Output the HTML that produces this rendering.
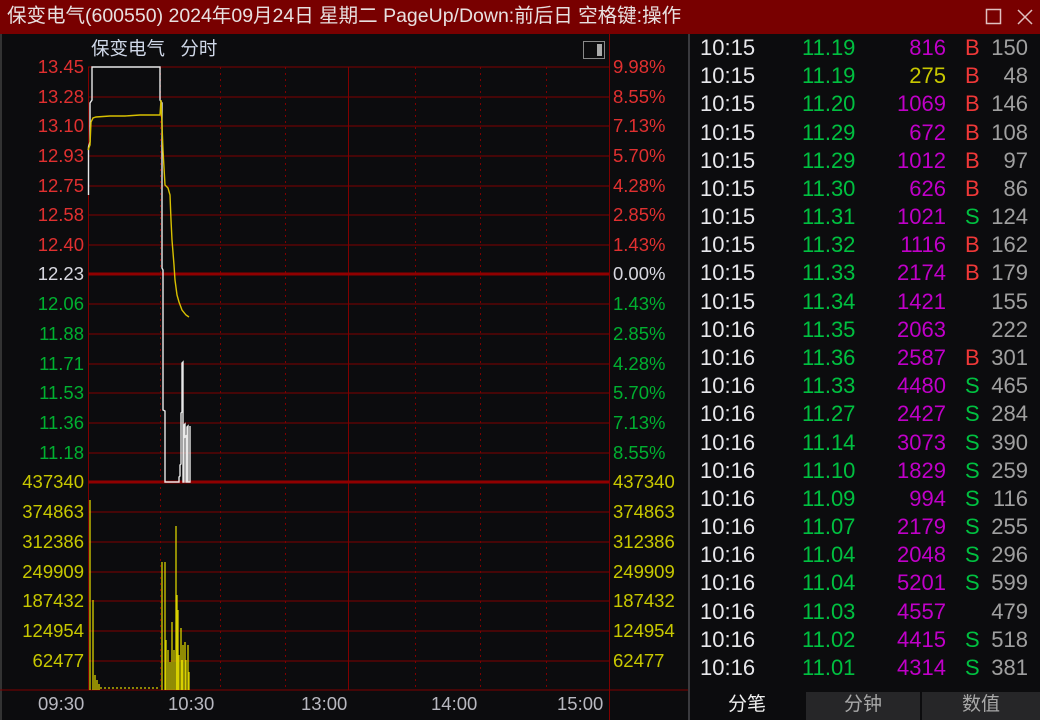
<!DOCTYPE html>
<html><head><meta charset="utf-8"><style>
*{margin:0;padding:0;box-sizing:border-box}
body{width:1040px;height:720px;background:#0c0c0e;overflow:hidden;position:relative;font-family:"Liberation Sans","Noto Sans CJK SC",sans-serif}
#title{position:absolute;left:0;top:0;width:1040px;height:34px;background:#780000;color:#e8e0e0;font-size:19.5px;line-height:33px;padding-left:7px;white-space:nowrap}
.l{position:absolute;font-size:18.5px;line-height:20px;white-space:nowrap}
.r{position:absolute;width:350px;left:690px;height:28px;font-size:22px;line-height:28px}
.r span{position:absolute}
.t{left:10px;color:#e8e8ec}.p{left:112px;color:#00c040}.v{right:94px;color:#c000c8}.f{left:275px}.n{right:12px;color:#a0a0a0}
.tab{position:absolute;top:692px;height:28px;font-size:19px;line-height:26px;text-align:center;color:#a8a8a8;background:#262628}
</style></head><body>
<div id="title">保变电气(600550) 2024年09月24日 星期二 PageUp/Down:前后日 空格键:操作</div>
<svg style="position:absolute;left:985px;top:8px" width="50" height="18"><rect x="1.5" y="1.5" width="14" height="14" fill="none" stroke="#e0c0c0" stroke-width="1.5"/><path d="M33 2L47 16M47 2L33 16" stroke="#e0c0c0" stroke-width="1.5"/></svg>
<div style="position:absolute;left:0;top:34px;width:2px;height:686px;background:#333"></div>
<div style="position:absolute;left:688px;top:34px;width:2px;height:686px;background:#3a3a3e"></div>
<svg style="position:absolute;left:0;top:0" width="690" height="720">
<g stroke="#800000" stroke-width="1" fill="none">
<path d="M88 67H609M88 97H609M88 126H609M88 156H609M88 186H609M88 215H609M88 245H609M88 304H609M88 334H609M88 364H609M88 393H609M88 423H609M88 453H609M88 512H609M88 542H609M88 572H609M88 601H609M88 631H609M88 661H609M0 690H688"/>
<path d="M88.5 67V690M348.5 67V690M609.5 34V720"/>
<path d="M160.5 67V690M220.5 67V690M285.5 67V690M415.5 67V690M480.5 67V690M546.5 67V690" stroke-dasharray="2 4"/>
</g>
<path d="M88 274H609M88 482H609" stroke="#900000" stroke-width="3"/>
<rect x="583.5" y="41.5" width="21" height="17" fill="none" stroke="#888"/><rect x="597" y="44" width="5" height="12" fill="#aaa"/>
<path d="M88.5 195V147L90 142V103L92 100V67H160V100L162 103V268L163 270V410L165 411V482H179V477L180 476V465L181 464V413L182 412V363L183 362V482L184 482V425L185 424V437L186 436V482L187 482V427L188 426V482L190 482V426" stroke="#e8e8e8" stroke-width="1.4" fill="none"/>
<path d="M88 150L90 145L91 122L93 118L96 117L110 116L125 116L140 115L160 115L161 100L162 125L163 150L165 185L168 188L170 195L171 220L172 240L174 265L175 280L177 295L179 302L182 310L186 315L189 317" stroke="#d8c000" stroke-width="1.4" fill="none"/>
<g stroke="#d8d000" stroke-width="1.3">
<path d="M90 690V500M93 690V600M95 690V675M97 690V680M99 690V684M162 690V562M165 690V562M166 690V640M168 690V650M170 690V662M172 690V622M174 690V650M176 690V526M177 690V595M178 690V610M179 690V655M181 690V628M182 690V660M183 690V645M185 690V642M186 690V660M188 690V645M189 690V672"/>
<path d="M100 688H160" stroke-dasharray="2 2"/>
</g>
</svg>
<div class="l" style="left:91px;top:39px;color:#d0d8e8">保变电气&nbsp;&nbsp;&nbsp;分时</div>
<div id="axes"></div>
<div class="l" style="left:38px;top:694px;color:#b8b8c0">09:30</div>
<div class="l" style="left:168px;top:694px;color:#b8b8c0">10:30</div>
<div class="l" style="left:301px;top:694px;color:#b8b8c0">13:00</div>
<div class="l" style="left:431px;top:694px;color:#b8b8c0">14:00</div>
<div class="l" style="left:557px;top:694px;color:#b8b8c0">15:00</div>
<div class="tab" style="left:690px;width:114px;background:#0c0c0e;color:#f0f0f0">分笔</div>
<div class="tab" style="left:806px;width:114px">分钟</div>
<div class="tab" style="left:922px;width:118px">数值</div>
<div id="rows"></div>
<script>
var L=[["13.45","9.98%","#e03030"],["13.28","8.55%","#e03030"],["13.10","7.13%","#e03030"],["12.93","5.70%","#e03030"],["12.75","4.28%","#e03030"],["12.58","2.85%","#e03030"],["12.40","1.43%","#e03030"],["12.23","0.00%","#d8d8e0"],["12.06","1.43%","#00b030"],["11.88","2.85%","#00b030"],["11.71","4.28%","#00b030"],["11.53","5.70%","#00b030"],["11.36","7.13%","#00b030"],["11.18","8.55%","#00b030"],["437340","437340","#c8c800"],["374863","374863","#c8c800"],["312386","312386","#c8c800"],["249909","249909","#c8c800"],["187432","187432","#c8c800"],["124954","124954","#c8c800"],["62477","62477","#c8c800"]];
var Y=[67,97,126,156,186,215,245,274,304,334,364,393,423,453,482,512,542,572,601,631,661],h="";
L.forEach(function(a,i){h+='<div class="l" style="right:'+(1040-84)+'px;top:'+(Y[i]-10)+'px;color:'+a[2]+'">'+a[0]+'</div><div class="l" style="left:613px;top:'+(Y[i]-10)+'px;color:'+a[2]+'">'+a[1]+'</div>';});
document.getElementById('axes').innerHTML=h;
var R=[["10:15","11.19","816","B","150"],["10:15","11.19","275","B","48"],["10:15","11.20","1069","B","146"],["10:15","11.29","672","B","108"],["10:15","11.29","1012","B","97"],["10:15","11.30","626","B","86"],["10:15","11.31","1021","S","124"],["10:15","11.32","1116","B","162"],["10:15","11.33","2174","B","179"],["10:15","11.34","1421","","155"],["10:16","11.35","2063","","222"],["10:16","11.36","2587","B","301"],["10:16","11.33","4480","S","465"],["10:16","11.27","2427","S","284"],["10:16","11.14","3073","S","390"],["10:16","11.10","1829","S","259"],["10:16","11.09","994","S","116"],["10:16","11.07","2179","S","255"],["10:16","11.04","2048","S","296"],["10:16","11.04","5201","S","599"],["10:16","11.03","4557","","479"],["10:16","11.02","4415","S","518"],["10:16","11.01","4314","S","381"]];
h="";R.forEach(function(a,i){var y=Math.round(47+28.18*i-13);h+='<div class="r" style="top:'+y+'px"><span class="t">'+a[0]+'</span><span class="p">'+a[1]+'</span><span class="v"'+(i==1?' style="color:#c8c800"':'')+'>'+a[2]+'</span><span class="f" style="color:'+(a[3]=="B"?"#f03838":"#00c040")+'">'+a[3]+'</span><span class="n">'+a[4]+'</span></div>';});
document.getElementById('rows').innerHTML=h;
</script>
</body></html>
